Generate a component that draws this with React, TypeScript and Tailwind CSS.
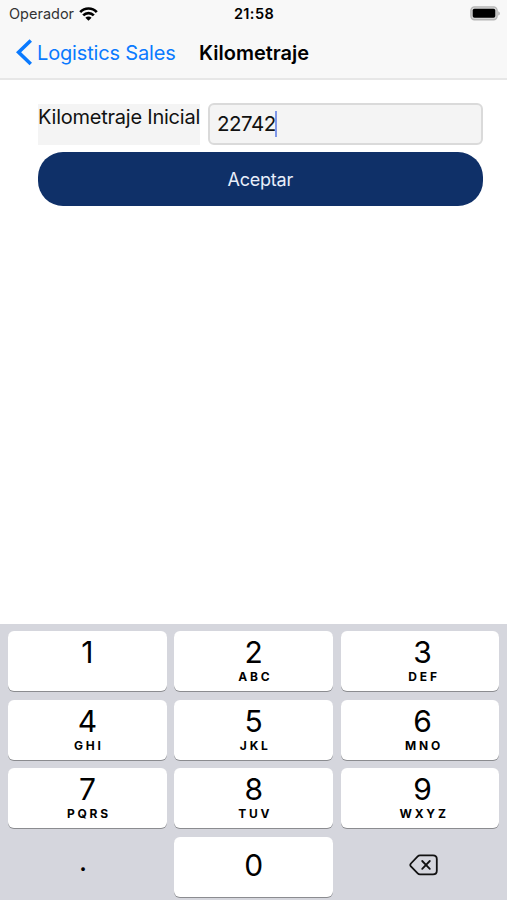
type KeyDef = { digit: string; letters?: string }

const KEYS: KeyDef[] = [
  { digit: "1" },
  { digit: "2", letters: "ABC" },
  { digit: "3", letters: "DEF" },
  { digit: "4", letters: "GHI" },
  { digit: "5", letters: "JKL" },
  { digit: "6", letters: "MNO" },
  { digit: "7", letters: "PQRS" },
  { digit: "8", letters: "TUV" },
  { digit: "9", letters: "WXYZ" },
]

function WifiIcon() {
  return (
    <svg width="19" height="14" viewBox="0 0 19 14" fill="none" stroke="#000" strokeWidth="2.7">
      <path d="M1.2 5.1C5.8 0.3 13.2 0.3 17.8 5.1" />
      <path d="M4.2 8.4C7.2 5.4 11.8 5.4 14.8 8.4" />
      <path d="M9.5 13.8L6.4 10.7C8 9.1 11 9.1 12.6 10.7Z" fill="#000" stroke="none" />
    </svg>
  )
}

function BatteryIcon() {
  return (
    <svg width="30" height="15" viewBox="0 0 30 15">
      <rect x="0.9" y="0.9" width="26.2" height="12.8" rx="3.6" fill="#d4d4d4" stroke="#b5b5b5" strokeWidth="1.4" />
      <rect x="2.7" y="2.8" width="22.6" height="9" rx="1.8" fill="#000" />
      <path d="M28.3 5.2C30.2 6 30.2 8.8 28.3 9.6Z" fill="#a8a8a8" />
    </svg>
  )
}

function BackspaceIcon() {
  return (
    <svg width="30" height="22" viewBox="0 0 30 22" fill="none" stroke="#111" strokeWidth="1.8" strokeLinecap="round" strokeLinejoin="round">
      <path d="M11 1.4H24C26.6 1.4 27.8 2.6 27.8 5V16.8C27.8 19.2 26.6 20.4 24 20.4H11C10 20.4 9.4 20.1 8.7 19.4L1.9 12.3C1.1 11.4 1.1 10.4 1.9 9.5L8.7 2.4C9.4 1.7 10 1.4 11 1.4Z" />
      <path d="M13.2 7L20.8 14.8M20.8 7L13.2 14.8" />
    </svg>
  )
}

function Key({ digit, letters }: KeyDef) {
  return (
    <button className="flex h-[60px] flex-col items-center rounded-[6px] bg-white pt-[3px] shadow-[0_1px_0_#8b8c90] nth-[3n]:pl-[5px]">
      <span className="text-[30px] leading-[36px]">{digit}</span>
      {letters && (
        <span className="pl-[3px] text-[12px] leading-[13px] font-bold tracking-[2.8px]">{letters}</span>
      )}
    </button>
  )
}

export default function App() {
  return (
    <div className="flex h-[900px] w-[507px] flex-col overflow-hidden bg-white font-['Inter',sans-serif] text-black">
      <header className="h-[80px] border-b-2 border-[#e7e7e7] bg-[#f8f8f8]">
        {/* Status bar */}
        <div className="grid h-[27px] grid-cols-3 items-center pr-[7px] pl-[9px]">
          <div className="flex items-center gap-[5px]">
            <span className="text-[14.5px] text-[#333]">Operador</span>
            <WifiIcon />
          </div>
          <span className="pr-px text-center text-[14.5px] font-semibold tracking-[0.4px]">21:58</span>
          <div className="flex justify-end">
            <BatteryIcon />
          </div>
        </div>

        {/* Navigation bar */}
        <div className="flex h-[51px] items-center pl-[15px]">
          <svg width="17" height="27" viewBox="0 0 17 27" fill="none" stroke="#0a7aff" strokeWidth="3.6">
            <path d="M15.8 1.5L3.6 13.2L15.8 25" />
          </svg>
          <a className="ml-[5px] w-[162px] text-[20px] tracking-[-0.16px] whitespace-nowrap text-[#0a7aff]">Logistics Sales</a>
          <h1 className="text-[20px] font-semibold">Kilometraje</h1>
        </div>
      </header>

      <main className="flex-1 pt-[24px] pr-[24.5px] pl-[38px]">
        <div className="flex h-[41px] gap-[8px]">
          <label className="w-[162px] bg-[#f4f4f4] text-[20px] leading-[26px] tracking-[-0.23px] whitespace-nowrap text-[#111]">
            Kilometraje Inicial
          </label>
          <div className="-mt-px flex h-[42px] flex-1 items-center rounded-[6px] border-2 border-[#dadada] bg-[#f4f4f4] pl-[7px]">
            <span className="text-[20.5px] tracking-[-0.5px] text-[#111]">22742</span>
            <span className="-ml-px h-[26px] w-[2.5px] bg-[#7f97e8]" />
          </div>
        </div>
        <button className="mt-[7px] h-[54px] w-full rounded-[25px] bg-[#0f3068] text-[18px] tracking-[-0.2px] text-[#e8eefa]">
          Aceptar
        </button>
      </main>

      {/* Numeric keyboard */}
      <div className="grid h-[276px] grid-cols-3 content-start gap-x-[7.5px] gap-y-[8.6px] bg-[#d5d6dd] pt-[7px] pr-[7.5px] pl-[8px]">
        {KEYS.map((key) => (
          <Key key={key.digit} {...key} />
        ))}
        <button className="flex h-[60px] justify-center pt-[6px] pr-[9px] text-[28px] leading-[36px]">.</button>
        <button className="flex h-[60px] items-center justify-center rounded-[6px] bg-white pb-[3px] text-[30px] shadow-[0_1px_0_#8b8c90]">
          0
        </button>
        <button className="flex h-[60px] items-center justify-center pb-[3px] pl-[7px]">
          <BackspaceIcon />
        </button>
      </div>
    </div>
  )
}
